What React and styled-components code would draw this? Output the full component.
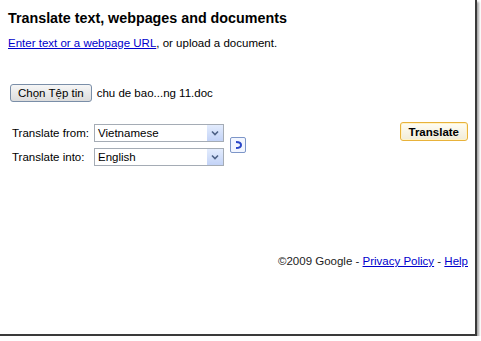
import styled, { createGlobalStyle } from 'styled-components'

const Global = createGlobalStyle`
  body {
    margin: 0;
    background: #ffffff;
    font-family: "Liberation Sans", Arial, sans-serif;
  }
`

const Frame = styled.div`
  width: 477px;
  height: 336px;
  box-sizing: border-box;
  background: #fff;
  border-right: 2px solid #3a3a3a;
  border-bottom: 2px solid #3a3a3a;
  box-shadow: 2px 2px 2px rgba(0, 0, 0, 0.35);
  padding: 9px 7px 0 8px;
  display: flex;
  flex-direction: column;
  font-size: 11.5px;
  color: #000;
`

const Title = styled.h1`
  margin: 0;
  font-size: 14.3px;
  font-weight: bold;
  line-height: 18px;
`

const Intro = styled.p`
  margin: 9px 0 0;
  line-height: 14px;
`

const Link = styled.a`
  color: #0000cc;
  text-decoration: underline;
`

const FileRow = styled.div`
  display: flex;
  align-items: center;
  gap: 5px;
  margin: 34px 0 0 2px;
`

const FileButton = styled.button`
  font-family: inherit;
  font-size: 11.5px;
  height: 18px;
  padding: 0 7px;
  background: linear-gradient(#f6f6f6, #dcdcdc);
  border: 1px solid #7a8ea8;
  border-radius: 3px;
`

const Form = styled.div`
  display: flex;
  align-items: flex-start;
  margin: 22px 0 0 4px;
`

const Fields = styled.div`
  display: grid;
  grid-template-columns: 82px 130px;
  row-gap: 6px;
  align-items: center;
`

const Label = styled.span`
  white-space: nowrap;
`

const Select = styled.div`
  height: 18px;
  box-sizing: border-box;
  border: 1px solid #a5acb5;
  display: flex;
  align-items: center;
  padding-left: 3px;
  justify-content: space-between;
`

const Arrow = styled.span`
  width: 16px;
  height: 16px;
  background: linear-gradient(#e3ecfd, #c3d3f7);
  display: flex;
  align-items: center;
  justify-content: center;
`

const Swap = styled.span`
  width: 14px;
  height: 14px;
  margin: 13px 0 0 6px;
  border: 1px solid #7d96c8;
  border-radius: 2px;
  background: #f2f6ff;
  display: flex;
  align-items: center;
  justify-content: center;
`

const TranslateButton = styled.button`
  margin-left: auto;
  margin-top: -2px;
  font-family: inherit;
  font-size: 11.5px;
  font-weight: bold;
  height: 19px;
  padding: 0 8px;
  background: linear-gradient(#fffdf3, #f1ecd9);
  border: 1px solid #e8b23a;
  border-radius: 3px;
  box-shadow: inset 0 0 0 1px #fff3c8;
`

const Footer = styled.div`
  margin-top: 89px;
  text-align: right;
  color: #222;
`

function Chevron() {
  return (
    <svg width="8" height="6" viewBox="0 0 8 6">
      <path d="M1 1.5 L4 4.5 L7 1.5" fill="none" stroke="#4d6185" strokeWidth="1.6" />
    </svg>
  )
}

export default function App() {
  return (
    <>
      <Global />
      <Frame>
        <Title>Translate text, webpages and documents</Title>
        <Intro>
          <Link href="#">Enter text or a webpage URL</Link>, or upload a document.
        </Intro>
        <FileRow>
          <FileButton>Chọn Tệp tin</FileButton>
          <span>chu de bao...ng 11.doc</span>
        </FileRow>
        <Form>
          <Fields>
            <Label>Translate from:</Label>
            <Select>Vietnamese<Arrow><Chevron /></Arrow></Select>
            <Label>Translate into:</Label>
            <Select>English<Arrow><Chevron /></Arrow></Select>
          </Fields>
          <Swap>
            <svg width="10" height="10" viewBox="0 0 10 10">
              <path d="M3 2 Q8 2 8 5 Q8 8 3 8" fill="none" stroke="#2a47c8" strokeWidth="2" />
            </svg>
          </Swap>
          <TranslateButton>Translate</TranslateButton>
        </Form>
        <Footer>
          ©2009 Google - <Link href="#">Privacy Policy</Link> - <Link href="#">Help</Link>
        </Footer>
      </Frame>
    </>
  )
}
